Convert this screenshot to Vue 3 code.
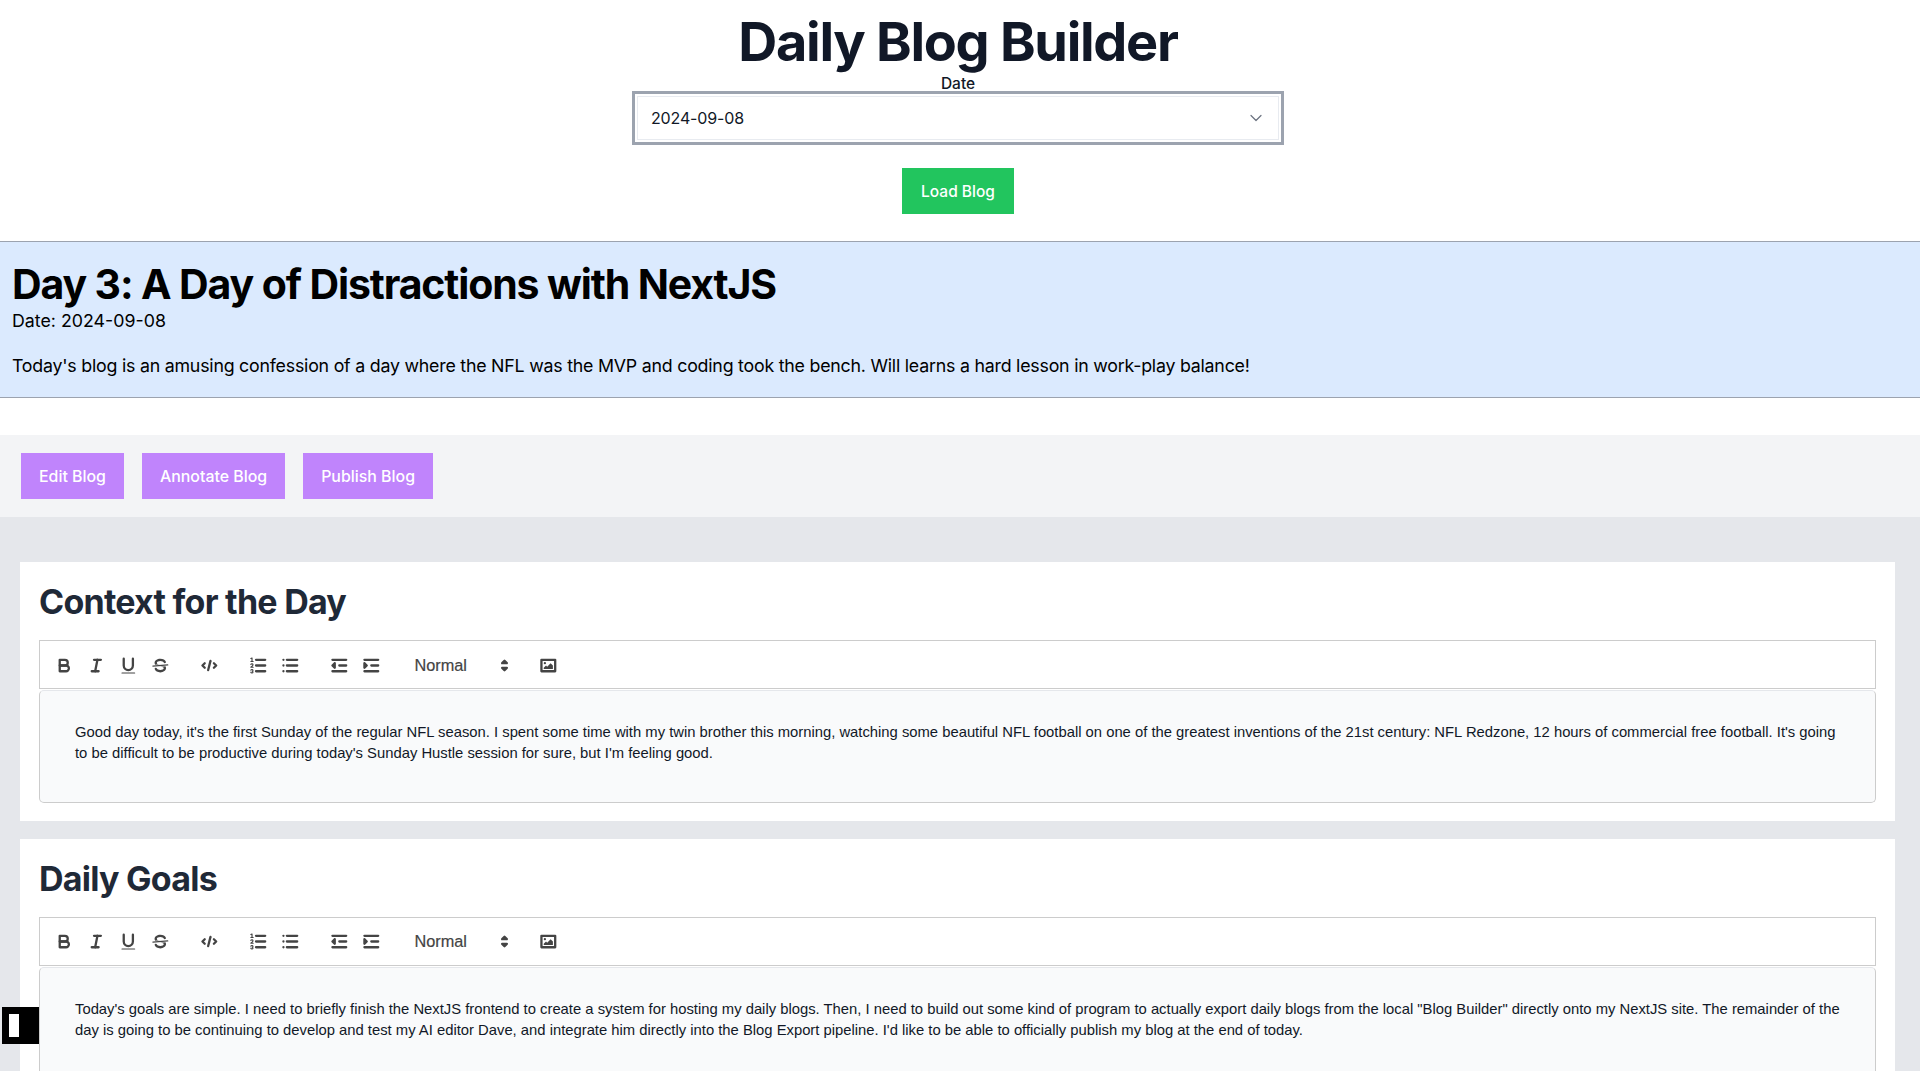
<template>
  <div class="page">
    <header class="top">
      <h1 class="title">Daily Blog Builder</h1>
      <label class="date-label">Date</label>
      <div class="date-select">
        <span>2024-09-08</span>
        <svg class="chevron" viewBox="0 0 20 20" fill="none" stroke="#6b7280" stroke-width="1.2">
          <path d="M5 7.5l5 5 5-5" stroke-linecap="round" stroke-linejoin="round" />
        </svg>
      </div>
      <button class="load-btn">Load Blog</button>
    </header>

    <section class="summary">
      <h2 class="summary-title">Day 3: A Day of Distractions with NextJS</h2>
      <p class="summary-date">Date: 2024-09-08</p>
      <p class="summary-text">
        Today's blog is an amusing confession of a day where the NFL was the MVP and coding took the bench. Will learns a hard lesson in work-play balance!
      </p>
    </section>

    <div class="actions">
      <button v-for="label in actions" :key="label" class="action-btn">{{ label }}</button>
    </div>

    <main class="sections">
      <section v-for="section in sections" :key="section.title" class="card">
        <h3 class="card-title">{{ section.title }}</h3>
        <div class="toolbar">
          <span class="group">
            <button class="tool">
              <svg viewBox="0 0 18 18">
                <path class="st" d="M5,4H9.5A2.5,2.5,0,0,1,12,6.5v0A2.5,2.5,0,0,1,9.5,9H5A0,0,0,0,1,5,9V4A0,0,0,0,1,5,4Z" />
                <path class="st" d="M5,9h5.5A2.5,2.5,0,0,1,13,11.5v0A2.5,2.5,0,0,1,10.5,14H5a0,0,0,0,1,0,0V9A0,0,0,0,1,5,9Z" />
              </svg>
            </button>
            <button class="tool">
              <svg viewBox="0 0 18 18">
                <line class="st" x1="7" x2="13" y1="4" y2="4" />
                <line class="st" x1="5" x2="11" y1="14" y2="14" />
                <line class="st" x1="8" x2="10" y1="14" y2="4" />
              </svg>
            </button>
            <button class="tool">
              <svg viewBox="0 0 18 18">
                <path class="st" d="M5,3V9a4.012,4.012,0,0,0,4,4H9a4.012,4.012,0,0,0,4-4V3" />
                <rect class="fl" height="1" rx="0.5" ry="0.5" width="12" x="3" y="15" />
              </svg>
            </button>
            <button class="tool">
              <svg viewBox="0 0 18 18">
                <line class="st thin" x1="15.5" x2="2.5" y1="8.5" y2="9.5" />
                <path class="fl" d="M9.007,8C6.542,7.791,6,7.519,6,6.5,6,5.792,7.283,5,9,5c1.571,0,2.765.679,2.969,1.309a1,1,0,0,0,1.9-.617C13.356,4.106,11.354,3,9,3,6.2,3,4,4.538,4,6.5a3.2,3.2,0,0,0,.5,1.843Z" />
                <path class="fl" d="M8.984,10C11.457,10.208,12,10.479,12,11.5c0,.708-1.283,1.5-3,1.5-1.571,0-2.765-.679-2.969-1.309a1,1,0,1,0-1.9.617C4.644,13.894,6.646,15,9,15c2.8,0,5-1.538,5-3.5a3.2,3.2,0,0,0-.5-1.843Z" />
              </svg>
            </button>
          </span>
          <span class="group">
            <button class="tool">
              <svg viewBox="0 0 18 18">
                <polyline class="st" points="5 7 3 9 5 11" />
                <polyline class="st" points="13 7 15 9 13 11" />
                <line class="st" x1="10" x2="8" y1="5" y2="13" />
              </svg>
            </button>
          </span>
          <span class="group">
            <button class="tool">
              <svg viewBox="0 0 18 18">
                <line class="st" x1="7" x2="15" y1="4" y2="4" />
                <line class="st" x1="7" x2="15" y1="9" y2="9" />
                <line class="st" x1="7" x2="15" y1="14" y2="14" />
                <line class="st thin" x1="2.5" x2="4.5" y1="5.5" y2="5.5" />
                <path class="fl" d="M3.5,6A0.5,0.5,0,0,1,3,5.5V3.085l-0.276.138A0.5,0.5,0,0,1,2.053,3c-0.124-.247-0.023-0.324.224-0.447l1-.5A0.5,0.5,0,0,1,4,2.5v3A0.5,0.5,0,0,1,3.5,6Z" />
                <path class="st thin" d="M4.5,10.5h-2c0-.234,1.85-1.076,1.85-2.234A0.959,0.959,0,0,0,2.5,8.156" />
                <path class="st thin" d="M2.5,14.846a0.959,0.959,0,0,0,1.85-.109A0.7,0.7,0,0,0,3.75,14a0.688,0.688,0,0,0,.6-0.736,0.959,0.959,0,0,0-1.85-.109" />
              </svg>
            </button>
            <button class="tool">
              <svg viewBox="0 0 18 18">
                <line class="st" x1="6" x2="15" y1="4" y2="4" />
                <line class="st" x1="6" x2="15" y1="9" y2="9" />
                <line class="st" x1="6" x2="15" y1="14" y2="14" />
                <line class="st" x1="3" x2="3" y1="4" y2="4" />
                <line class="st" x1="3" x2="3" y1="9" y2="9" />
                <line class="st" x1="3" x2="3" y1="14" y2="14" />
              </svg>
            </button>
          </span>
          <span class="group">
            <button class="tool">
              <svg viewBox="0 0 18 18">
                <line class="st" x1="3" x2="15" y1="14" y2="14" />
                <line class="st" x1="3" x2="15" y1="4" y2="4" />
                <line class="st" x1="9" x2="15" y1="9" y2="9" />
                <polyline class="st fl" points="5 7 5 11 3 9 5 7" />
              </svg>
            </button>
            <button class="tool">
              <svg viewBox="0 0 18 18">
                <line class="st" x1="3" x2="15" y1="14" y2="14" />
                <line class="st" x1="3" x2="15" y1="4" y2="4" />
                <line class="st" x1="9" x2="15" y1="9" y2="9" />
                <polyline class="st fl" points="3 7 3 11 5 9 3 7" />
              </svg>
            </button>
          </span>
          <span class="group">
            <span class="picker">
              <span>Normal</span>
              <svg viewBox="0 0 18 18">
                <polygon class="st fl" points="7 11 9 13 11 11 7 11" />
                <polygon class="st fl" points="7 7 9 5 11 7 7 7" />
              </svg>
            </span>
          </span>
          <span class="group">
            <button class="tool">
              <svg viewBox="0 0 18 18">
                <rect class="st" height="10" width="12" x="3" y="4" />
                <circle class="fl" cx="6" cy="7" r="1" />
                <polyline class="fl" points="5 12 5 11 7 9 8 10 11 7 13 9 13 12 5 12" />
              </svg>
            </button>
          </span>
        </div>
        <div class="editor">
          <p>{{ section.text }}</p>
        </div>
      </section>
    </main>

    <div class="corner-badge"><span class="corner-mark"></span></div>
  </div>
</template>

<script setup>
const actions = ["Edit Blog", "Annotate Blog", "Publish Blog"];

const sections = [
  {
    title: "Context for the Day",
    text: "Good day today, it's the first Sunday of the regular NFL season. I spent some time with my twin brother this morning, watching some beautiful NFL football on one of the greatest inventions of the 21st century: NFL Redzone, 12 hours of commercial free football. It's going to be difficult to be productive during today's Sunday Hustle session for sure, but I'm feeling good.",
  },
  {
    title: "Daily Goals",
    text: "Today's goals are simple. I need to briefly finish the NextJS frontend to create a system for hosting my daily blogs. Then, I need to build out some kind of program to actually export daily blogs from the local \"Blog Builder\" directly onto my NextJS site. The remainder of the day is going to be continuing to develop and test my AI editor Dave, and integrate him directly into the Blog Export pipeline. I'd like to be able to officially publish my blog at the end of today.",
  },
];
</script>

<style>
html,
body {
  margin: 0;
  height: 100%;
  overflow: hidden;
  background: #fff;
}
</style>

<style scoped>
.page {
  height: 1071px;
  overflow: hidden;
  font-family: Inter, "Liberation Sans", sans-serif;
  color: #111827;
}

.top {
  height: 241px;
  box-sizing: border-box;
  padding: 12px 4px 0 0;
  display: flex;
  flex-direction: column;
  align-items: center;
  background: #fff;
}

.title {
  margin: 0;
  font-size: 54px;
  line-height: 60px;
  font-weight: 700;
  letter-spacing: -1.3px;
  color: #111827;
}

.date-label {
  margin-top: 4px;
  font-size: 15.5px;
  line-height: 15px;
  font-weight: 500;
}

.date-select {
  width: 652px;
  height: 54px;
  box-sizing: border-box;
  display: flex;
  align-items: center;
  justify-content: space-between;
  padding: 0 15px 0 16px;
  border: 3px solid #9ca3af;
  box-shadow: inset 0 0 0 2px #fff, inset 0 0 0 3px #e8ebf0;
  font-size: 16px;
  letter-spacing: -0.15px;
}

.chevron {
  width: 20px;
  height: 20px;
}

.load-btn {
  margin-top: 23px;
  width: 112px;
  height: 46px;
  border: 0;
  padding: 0;
  background: #22c55e;
  color: #fff;
  font: 500 15.5px Inter, "Liberation Sans", sans-serif;
}

.summary {
  height: 157px;
  box-sizing: border-box;
  padding: 17px 12px 0;
  background: #dbeafe;
  border-top: 1px solid #9ca3af;
  border-bottom: 1px solid #9ca3af;
  color: #000;
}

.summary-title {
  margin: 0;
  font-size: 41px;
  line-height: 50px;
  font-weight: 700;
  letter-spacing: -1.13px;
}

.summary-date {
  margin: 0;
  font-size: 17.8px;
  line-height: 23px;
}

.summary-text {
  margin: 23px 0 0;
  font-size: 17.8px;
  line-height: 22px;
  letter-spacing: -0.225px;
}

.actions {
  margin-top: 37px;
  height: 82px;
  box-sizing: border-box;
  padding: 18px 21px;
  display: flex;
  gap: 18px;
  background: #f3f4f6;
}

.action-btn {
  height: 46px;
  padding: 0 18px;
  border: 0;
  background: #c084fc;
  color: #fff;
  font: 500 15.9px Inter, "Liberation Sans", sans-serif;
}

.sections {
  padding: 45px 25px 0 20px;
  display: flex;
  flex-direction: column;
  gap: 18px;
  background: #e5e7eb;
  height: 554px;
  box-sizing: border-box;
}

.card {
  flex: none;
  height: 258.6px;
  box-sizing: border-box;
  padding: 19px 19px 18px;
  background: #fff;
}

.card-title {
  margin: 0;
  height: 59.4px;
  font-size: 34px;
  line-height: 42px;
  font-weight: 700;
  letter-spacing: -0.75px;
  color: #1f2937;
}

.toolbar {
  height: 49px;
  box-sizing: border-box;
  display: flex;
  align-items: center;
  padding: 1px 8.5px 0;
  border: 1px solid #ccc;
  color: #444;
}

.group {
  display: inline-flex;
  align-items: center;
  margin-right: 17px;
}

.tool {
  width: 32px;
  height: 27px;
  padding: 3px 5.7px;
  box-sizing: border-box;
  border: 0;
  background: none;
  display: block;
}

.tool svg {
  display: block;
  width: 100%;
  height: 100%;
}

.st {
  fill: none;
  stroke: #444;
  stroke-width: 2;
  stroke-linecap: round;
  stroke-linejoin: round;
}

.thin {
  stroke-width: 1;
}

.fl {
  fill: #444;
}

.picker {
  width: 111px;
  height: 27px;
  box-sizing: border-box;
  padding-left: 10px;
  padding-right: 1px;
  display: flex;
  align-items: center;
  justify-content: space-between;
  font: 400 16.3px "Liberation Sans", sans-serif;
  -webkit-text-stroke: 0.2px #444;
}

.picker svg {
  width: 21px;
  height: 21px;
}

.editor {
  height: 113px;
  margin-top: 1px;
  box-sizing: border-box;
  padding: 31px 33px 0 35px;
  background: #f9fafb;
  border: 1px solid #ccc;
  border-top-color: #e5e7eb;
  border-radius: 5px;
  font: 14.8px/21px "Liberation Sans", sans-serif;
  color: #111827;
}

.editor p {
  margin: 0;
}

.corner-badge {
  position: fixed;
  left: 2px;
  top: 1007px;
  width: 37px;
  height: 37px;
  background: #000;
  box-sizing: border-box;
  padding: 7px;
}

.corner-mark {
  display: block;
  width: 10px;
  height: 23px;
  background: #fff;
}
</style>
